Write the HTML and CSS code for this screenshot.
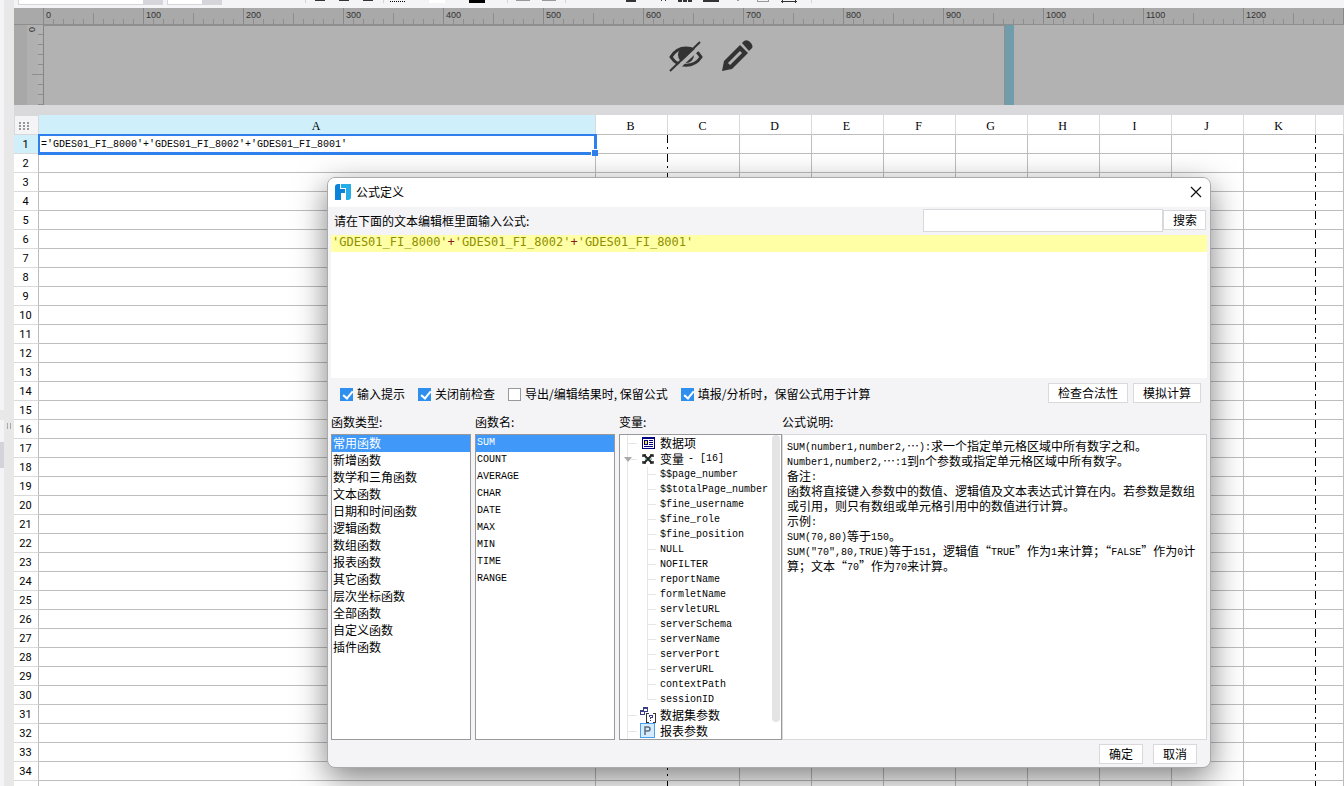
FILE: index.html
```html
<!DOCTYPE html>
<html lang="zh-CN">
  <head>
    <meta charset="UTF-8" />
    <title>公式定义</title>
    <link rel="stylesheet" href="styles.css" />
  </head>

  <body>
    <div class="app">
      <div class="side-strip">
        <div class="side-panel"></div>
        <div class="side-handle"></div>
      </div>

      <div class="main">
        <div class="toolbar">
          <select class="font-name" aria-label="字体"><option>Arial</option></select>
          <select class="font-size" aria-label="字号"><option></option></select>
          <svg class="tool-icons" width="590" height="8" viewBox="222 0 590 8" shape-rendering="crispEdges">
            <path d="M305 0h1v3h-1zM383 0h1v3h-1zM507 0h1v3h-1zM565 0h1v3h-1zM811 0h1v3h-1z" fill="#d4d4d8" />
            <path d="M315 0h10v1h-10zM339 0h10v1h-10zM363 0h10v1h-10zM626 0h10v2h-10zM661 0h1v1h-1zM665 0h1v1h-1zM678 0h4v2h-4zM683 0h4v2h-4zM688 0h4v2h-4zM703 0h16v2h-16zM781 1h16v1h-16zM782 0h1v3h-1zM795 0h1v3h-1z" fill="#333" />
            <path d="M390 1.500h16" stroke="#000" stroke-dasharray="1 1" />
            <path d="M429 0h16v3h-16z" fill="#fff" />
            <path d="M469 0h16v3h-16z" fill="#000" />
            <path d="M516 0h14v1h-14zM542 0h14v1h-14zM737 0h2v1h-2zM757 0h1v2h-1zM768 0h1v2h-1zM757 1h12v1h-12z" fill="#999" />
          </svg>
        </div>

        <div class="canvas">
          <div class="ruler-top" id="rulerTop"></div>
          <div class="ruler-left"><span>0</span></div>
          <div class="page">
            <svg width="34" height="32" viewBox="0 0 34 32">
              <path d="M2 17C9 5 25 5 32 17C25 28 9 28 2 17Z" fill="none" stroke="#333" stroke-width="3" />
              <circle cx="17" cy="15" r="8" fill="#333" />
              <path d="M3 33L33 5" stroke="#b2b2b2" stroke-width="4" />
              <path d="M1 31L31 2" stroke="#333" stroke-width="2" />
            </svg>
            <svg width="32" height="32" viewBox="0 0 32 32">
              <path d="M1 31L3 21L19 5L27 13L11 29Z" fill="#333" />
              <path d="M8 24L20 12" stroke="#b2b2b2" stroke-width="3" />
              <path d="M21 3L23 1Q27 -1 30 3Q33 7 30 9L28 11Z" fill="#333" />
            </svg>
          </div>
          <div class="page-edge"></div>
          <div class="canvas-rest"></div>
        </div>

        <table class="sheet">
          <colgroup>
            <col class="col-index" />
            <col class="col-a" />
            <col class="col-std" span="10" />
            <col />
          </colgroup>
          <thead>
            <tr>
              <th class="corner">
                <svg width="11" height="9" viewBox="0 0 11 9" fill="#999">
                  <path d="M0 0h2v2h-2zM4 0h2v2h-2zM8 0h2v2h-2zM0 3h2v2h-2zM4 3h2v2h-2zM8 3h2v2h-2zM0 6h2v2h-2zM4 6h2v2h-2zM8 6h2v2h-2z" />
                </svg>
              </th>
              <th class="active">A</th>
              <th>B</th>
              <th>C</th>
              <th>D</th>
              <th>E</th>
              <th>F</th>
              <th>G</th>
              <th>H</th>
              <th>I</th>
              <th>J</th>
              <th>K</th>
              <th></th>
            </tr>
          </thead>
          <tbody id="sheetBody"></tbody>
        </table>
      </div>
    </div>

    <div class="dialog" role="dialog" aria-labelledby="dialogTitle">
      <div class="title-bar">
        <svg width="16" height="16" viewBox="0 0 16 16">
          <path d="M3 0H5V5H10V9H6V16H0V3Q0 0 3 0Z" fill="#0a83d8" />
          <path d="M6 0H16V13Q16 16 13 16H11V4H6Z" fill="#25aee8" />
        </svg>
        <span id="dialogTitle">公式定义</span>
        <button type="button" class="close" aria-label="关闭">
          <svg width="12" height="12" viewBox="0 0 12 12">
            <path d="M1 1L11 11M11 1L1 11" stroke="#111" stroke-width="1.200" />
          </svg>
        </button>
      </div>

      <div class="dialog-body">
        <div class="prompt-row">
          <label for="search">请在下面的文本编辑框里面输入公式:</label>
          <input type="text" id="search" />
          <button type="button">搜索</button>
        </div>

        <div class="editor" contenteditable="true" spellcheck="false">
          <div class="editor-line">'GDES01_FI_8000'<b>+</b>'GDES01_FI_8002'<b>+</b>'GDES01_FI_8001'</div>
        </div>

        <div class="options">
          <label><input type="checkbox" checked />输入提示</label>
          <label><input type="checkbox" checked />关闭前检查</label>
          <label><input type="checkbox" />导出/编辑结果时, 保留公式</label>
          <label><input type="checkbox" checked />填报/分析时，保留公式用于计算</label>
          <div class="option-buttons">
            <button type="button">检查合法性</button>
            <button type="button">模拟计算</button>
          </div>
        </div>

        <div class="columns">
          <section class="column">
            <h2>函数类型:</h2>
            <ul class="list">
              <li class="selected">常用函数</li>
              <li>新增函数</li>
              <li>数学和三角函数</li>
              <li>文本函数</li>
              <li>日期和时间函数</li>
              <li>逻辑函数</li>
              <li>数组函数</li>
              <li>报表函数</li>
              <li>其它函数</li>
              <li>层次坐标函数</li>
              <li>全部函数</li>
              <li>自定义函数</li>
              <li>插件函数</li>
            </ul>
          </section>

          <section class="column">
            <h2>函数名:</h2>
            <ul class="list latin">
              <li class="selected">SUM</li>
              <li>COUNT</li>
              <li>AVERAGE</li>
              <li>CHAR</li>
              <li>DATE</li>
              <li>MAX</li>
              <li>MIN</li>
              <li>TIME</li>
              <li>RANGE</li>
            </ul>
          </section>

          <section class="column column-tree">
            <h2>变量:</h2>
            <div class="tree-box">
              <ul class="tree">
                <li class="node">
                  <svg width="16" height="16" viewBox="0 0 16 16" shape-rendering="crispEdges">
                    <path d="M2 2h13v12h-13z" fill="#000080" />
                    <path d="M3 4h11v9h-11z" fill="#fff" />
                    <path d="M4 5h4v5h-4zM9 5h4v1h-4zM9 7h4v1h-4zM9 9h4v1h-4zM4 11h9v1h-9z" fill="#000080" />
                    <path d="M5 6h2v3h-2z" fill="#ffe800" />
                  </svg>
                  数据项
                </li>
                <li class="node open">
                  <svg width="16" height="16" viewBox="0 0 16 16">
                    <path d="M4 4L12 12M12 4L4 12" stroke="#222" stroke-width="2" />
                    <path d="M3 6V4H6M3 10V12H6M13 6V4H10M13 10V12H10" fill="none" stroke="#222" stroke-width="1.500" />
                    <path d="M5 8h2M10 8h2" stroke="#279a70" stroke-width="1" />
                  </svg>
                  变量 <span class="latin">- [16]</span>
                </li>
                <li>
                  <ul class="vars latin">
                    <li>$$page_number</li>
                    <li>$$totalPage_number</li>
                    <li>$fine_username</li>
                    <li>$fine_role</li>
                    <li>$fine_position</li>
                    <li>NULL</li>
                    <li>NOFILTER</li>
                    <li>reportName</li>
                    <li>formletName</li>
                    <li>servletURL</li>
                    <li>serverSchema</li>
                    <li>serverName</li>
                    <li>serverPort</li>
                    <li>serverURL</li>
                    <li>contextPath</li>
                    <li>sessionID</li>
                  </ul>
                </li>
                <li class="node">
                  <svg width="16" height="16" viewBox="0 0 16 16" shape-rendering="crispEdges">
                    <path d="M3 0h5v5h-5zM0 3h5v5h-5z" fill="#3b3f86" />
                    <path d="M4 2h3v2h-3zM1 5h3v2h-3z" fill="#fff" />
                    <path d="M6 6h3v1h-2v8h2v1h-3zM16 6h-3v1h2v8h-2v1h3z" fill="#333" />
                    <path d="M9 8h4v3h-2v1h-1v-2h2v-1h-2v1h-1zM10 13h1v1h-1z" fill="#3b3f86" />
                  </svg>
                  数据集参数
                </li>
                <li class="node">
                  <svg width="16" height="16" viewBox="0 0 16 16" shape-rendering="crispEdges">
                    <path d="M0 0h15v15h-15z" fill="#4aa0ee" />
                    <path d="M1 1h13v13h-13z" fill="#d4ecfb" />
                    <path d="M5 12V4H8Q10 4 10 6Q10 8 8 8H5" fill="none" stroke="#5d6b7c" stroke-width="1.500" shape-rendering="auto" />
                  </svg>
                  报表参数
                </li>
              </ul>
              <div class="scrollbar"></div>
            </div>
          </section>

          <section class="column column-help">
            <h2>公式说明:</h2>
            <div class="help">
              <p><code>SUM(number1,number2,</code>…<code>):</code>求一个指定单元格区域中所有数字之和。</p>
              <p><code>Number1,number2,</code>…<code>:1</code>到<code>n</code>个参数或指定单元格区域中所有数字。</p>
              <p>备注<code>:</code></p>
              <p>函数将直接键入参数中的数值、逻辑值及文本表达式计算在内。若参数是数组或引用，则只有数组或单元格引用中的数值进行计算。</p>
              <p>示例<code>:</code></p>
              <p><code>SUM(70,80)</code>等于<code>150</code>。</p>
              <p><code>SUM("70",80,TRUE)</code>等于<code>151</code>，逻辑值“<code>TRUE</code>”作为<code>1</code>来计算；“<code>FALSE</code>”作为<code>0</code>计算；文本“<code>70</code>”作为<code>70</code>来计算。</p>
            </div>
          </section>
        </div>

        <div class="footer">
          <button type="button">确定</button>
          <button type="button">取消</button>
        </div>
      </div>
    </div>

    <script src="script.js"></script>
  </body>
</html>
```
FILE: styles.css
```css
* {
  box-sizing: border-box;
}

body {
  margin: 0;
  height: 100vh;
  overflow: hidden;
  background-color: #fff;
  color: #000;
  font-family: "Noto Sans CJK SC", sans-serif;
  font-size: 12px;
}

ul,
h2,
p {
  margin: 0;
  padding: 0;
  list-style: none;
}

svg {
  flex: none;
}

.latin,
code {
  font-family: "Liberation Mono", monospace;
  font-size: 10px;
}

.app {
  display: flex;
  height: 100%;
}

.main {
  flex: 1;
  min-width: 0;
}

/* left splitter */
.side-strip {
  display: flex;
  width: 14px;
  background-color: #e8e8e8;
}

.side-panel {
  width: 4px;
  background: linear-gradient(#f4f4f7 410px, #e8e8e8 410px 420px, #f4f4f7 420px 442px, #d3d3d9 442px 468px, #f4f4f7 468px);
}

.side-handle {
  width: 4px;
  height: 6px;
  margin: 423px 0 0 3px;
  border: solid #aaa;
  border-width: 0 1px;
}

/* toolbar */
.toolbar {
  display: flex;
  align-items: flex-end;
  height: 8px;
  overflow: hidden;
  background-color: #f4f4f7;
}

.toolbar select {
  appearance: none;
  flex: none;
  height: 22px;
  margin: 0 0 3px 4px;
  padding: 0 4px;
  border: 1px solid #d6d6da;
  border-radius: 0;
  background-color: #fff;
  font: 14px "Liberation Sans", sans-serif;
}

.toolbar .font-name {
  width: 145px;
  border-right-width: 20px;
}

.toolbar .font-size {
  width: 55px;
  border-right-width: 20px;
}

/* rulers and report page */
.canvas {
  display: grid;
  grid-template-columns: 30px 961px 9px 1fr;
  grid-template-rows: 17px 80px;
  border-bottom: 10px solid #d9d9db;
  box-sizing: content-box;
  background-color: #b2b2b2;
}

.ruler-top {
  grid-column: 1 / -1;
  display: flex;
  overflow: hidden;
  padding-left: 29px;
  border-bottom: 1px solid #8e8e8e;
  background:
    repeating-linear-gradient(90deg, #888 0 1px, transparent 1px 100px) 29px 0 / 100% 16px no-repeat,
    repeating-linear-gradient(90deg, #8e8e8e 0 1px, transparent 1px 50px) 29px 5px / 100% 11px no-repeat,
    repeating-linear-gradient(90deg, #8e8e8e 0 1px, transparent 1px 10px) 29px 11px / 100% 5px no-repeat,
    #a9a9a9;
}

.ruler-top span {
  flex: none;
  width: 100px;
  padding-left: 3px;
  color: #333;
  font: 9px/14px "Liberation Sans", sans-serif;
}

.ruler-left {
  padding-left: 1px;
  border-left: 13px solid #a8a8a8;
  border-right: 1px solid #858585;
  background:
    repeating-linear-gradient(#b2b2b2 0 9px, #8e8e8e 9px 10px) right / 5px 100% no-repeat,
    linear-gradient(#8e8e8e, #8e8e8e) right 49px / 11px 1px no-repeat,
    #b0b0b0;
  color: #333;
  font: 9px/9px "Liberation Sans", sans-serif;
}

.ruler-left span {
  writing-mode: vertical-rl;
  transform: rotate(180deg);
}

.page {
  display: flex;
  gap: 18px;
  padding-top: 14px;
  padding-left: 65%;
  border-top: 1px solid #8e8e8e;
  border-right: 1px solid #8e8e8e;
}

.page-edge {
  background-color: #6f9dab;
}

/* spreadsheet */
.sheet {
  width: 100%;
  table-layout: fixed;
  border-spacing: 0;
  font: 11px/16px Roboto, sans-serif;
  text-align: center;
}

.col-index {
  width: 25px;
}

.col-a {
  width: 557px;
}

.col-std {
  width: 72px;
}

.sheet th,
.sheet td {
  height: 19px;
  padding: 0;
  border: solid #bdbdbd;
  border-width: 0 1px 1px 0;
  font-weight: normal;
}

.sheet thead th {
  height: 20px;
  padding-top: 3px;
  padding-right: 2px;
  border-right-color: #d9d9d9;
  font: 12px/16px "Liberation Serif", serif;
}

.sheet tbody th {
  padding: 2px 1px 0 0;
  border-bottom-color: #d9d9d9;
}

.sheet thead .corner {
  padding: 3px 4px 0 0;
  border: 1px solid #d9d9db;
  background-color: #f4f4f7;
}

.corner svg {
  display: block;
  margin: 0 auto;
}

.sheet .active {
  background-color: #cfeffb;
}

.sheet .page-break {
  border-right: none;
  background: linear-gradient(#000 8px, transparent 8px 12px, #000 12px 14px, transparent 14px) right / 1px 100% no-repeat;
}

.sheet td.current {
  position: relative;
  padding: 2px 0 0 2px;
  font: 10px/16px "Liberation Mono", monospace;
  text-align: left;
}

.current::before {
  content: "";
  position: absolute;
  inset: -1px -2px -2px -1px;
  border: 2px solid #2f80ed;
  border-width: 2px 3px 3px 2px;
}

.current::after {
  content: "";
  position: absolute;
  right: -3px;
  bottom: -3px;
  width: 6px;
  height: 6px;
  border: solid #fff;
  border-width: 1px 0 0 1px;
  background-color: #2f80ed;
}

/* formula dialog */
.dialog {
  position: absolute;
  inset: 177px 133px 18px 327px;
  display: flex;
  flex-direction: column;
  overflow: hidden;
  border: 1px solid #aaa;
  border-radius: 8px;
  background-color: #f4f4f7;
  box-shadow: 0 10px 32px rgba(0, 0, 0, 0.5);
}

.title-bar {
  display: flex;
  align-items: center;
  gap: 5px;
  height: 29px;
  padding: 0 8px 2px 7px;
  background-color: #fff;
}

.title-bar span {
  line-height: 16px;
}

.title-bar .close {
  display: flex;
  height: 12px;
  margin-left: auto;
  padding: 0;
  border: none;
}

.dialog-body {
  flex: 1;
  display: flex;
  flex-direction: column;
  min-height: 0;
  padding: 0 3px;
}

button {
  height: 20px;
  padding: 0 9px;
  border: 1px solid #d9d9dc;
  background-color: #fff;
  color: #000;
  font: 12px/16px "Noto Sans CJK SC", sans-serif;
  white-space: nowrap;
}

.prompt-row {
  display: flex;
  align-items: center;
  height: 28px;
  padding: 0 1px 2px 3px;
}

.prompt-row input {
  width: 240px;
  height: 23px;
  margin-left: auto;
  border: 1px solid #d9d9dc;
  background-color: #fff;
}

.prompt-row button {
  width: 43px;
}

.editor {
  height: 143px;
  background-color: #fff;
  outline: none;
}

.editor-line {
  height: 17px;
  padding-left: 1px;
  background-color: #ffffa5;
  color: #8f8f00;
  font: 12px/15px "DejaVu Sans Mono", monospace;
}

.editor-line b {
  color: #8b1a1a;
  font-weight: normal;
}

.options {
  display: flex;
  align-items: center;
  gap: 13px;
  height: 32px;
  padding: 0 6px 0 9px;
  line-height: 16px;
  white-space: nowrap;
}

.options label {
  display: flex;
  align-items: center;
  gap: 4px;
}

.options input {
  appearance: none;
  width: 13px;
  height: 13px;
  margin: 0;
  border: 1px solid #999;
  background-color: #fff;
}

.options input:checked {
  border-color: #2f8fee;
  background-color: #2f8fee;
}

.options input:checked::after {
  content: "";
  display: block;
  width: 4px;
  height: 8px;
  margin: 0 0 0 4px;
  border: solid #fff;
  border-width: 0 2px 2px 0;
  transform: rotate(40deg);
}

.option-buttons {
  display: flex;
  gap: 5px;
  margin-left: auto;
  padding-bottom: 2px;
}

.columns {
  flex: 1;
  display: flex;
  gap: 4px;
  min-height: 0;
}

.column {
  display: flex;
  flex-direction: column;
  width: 140px;
}

.column-tree {
  width: 163px;
}

.column-help {
  flex: 1;
  margin-left: -4px;
}

.column h2 {
  height: 24px;
  font-size: 12px;
  font-weight: normal;
  line-height: 24px;
}

.list,
.tree-box {
  flex: 1;
  min-height: 0;
  border: 1px solid #999;
  background-color: #fff;
}

.list li {
  height: 17px;
  padding-left: 1px;
  line-height: 16px;
}

.list .selected {
  background-color: #4099f9;
  color: #fff;
}

.tree-box {
  display: flex;
  overflow: hidden;
}

.tree {
  flex: 1;
  height: 304px;
  margin-left: 7px;
  border-left: 1px solid #e6e6e6;
}

.node {
  display: flex;
  align-items: center;
  gap: 4px;
  height: 16px;
  padding-left: 12px;
  background: linear-gradient(#e6e6e6, #e6e6e6) 0 8px / 9px 1px no-repeat;
  line-height: 16px;
  white-space: nowrap;
}

.node.open {
  position: relative;
}

.node.open::before {
  content: "";
  position: absolute;
  left: -4px;
  top: 6px;
  border: 4px solid transparent;
  border-top: 5px solid #aaa;
  border-bottom: none;
}

.vars {
  margin-left: 19px;
  background: linear-gradient(#e6e6e6, #e6e6e6) 0 0 / 1px 232px no-repeat;
}

.vars li {
  height: 15px;
  padding-left: 13px;
  background: linear-gradient(#e6e6e6, #e6e6e6) 0 7px / 9px 1px no-repeat;
  line-height: 15px;
}

.scrollbar {
  flex: none;
  width: 8px;
  height: 287px;
  margin-right: 1px;
  border-radius: 4px;
  background-color: #e4e4e4;
}

.help {
  flex: 1;
  padding: 3px 5px 3px 4px;
  border: 1px solid #d9d9dc;
  background-color: #fff;
}

.help p {
  line-height: 15px;
}

.help code {
  line-height: 8px;
  vertical-align: 1px;
}

.footer {
  display: flex;
  justify-content: flex-end;
  gap: 10px;
  height: 27px;
  padding: 4px 10px 0 0;
}

.footer button {
  width: 44px;
}
```
FILE: script.js
```javascript
const ROWS = 35;
const COLS = 12;
const PAGE_BREAKS = [1, 10];
const formula = "='GDES01_FI_8000'+'GDES01_FI_8002'+'GDES01_FI_8001'";

// top ruler labels, one every 100px while they fit
const ruler = document.getElementById("rulerTop");
for (let i = 0; i * 100 + 60 < ruler.clientWidth; i++) {
  const label = document.createElement("span");
  label.textContent = i * 100;
  ruler.appendChild(label);
}

const body = document.getElementById("sheetBody");
for (let r = 1; r <= ROWS; r++) {
  const row = body.insertRow();
  const head = document.createElement("th");
  head.textContent = r;
  if (r === 1) head.className = "active";
  row.appendChild(head);

  for (let c = 0; c < COLS; c++) {
    const cell = row.insertCell();
    if (PAGE_BREAKS.includes(c)) cell.className = "page-break";
    if (r === 1 && c === 0) {
      cell.className = "current";
      cell.textContent = formula;
    }
  }
}
```
